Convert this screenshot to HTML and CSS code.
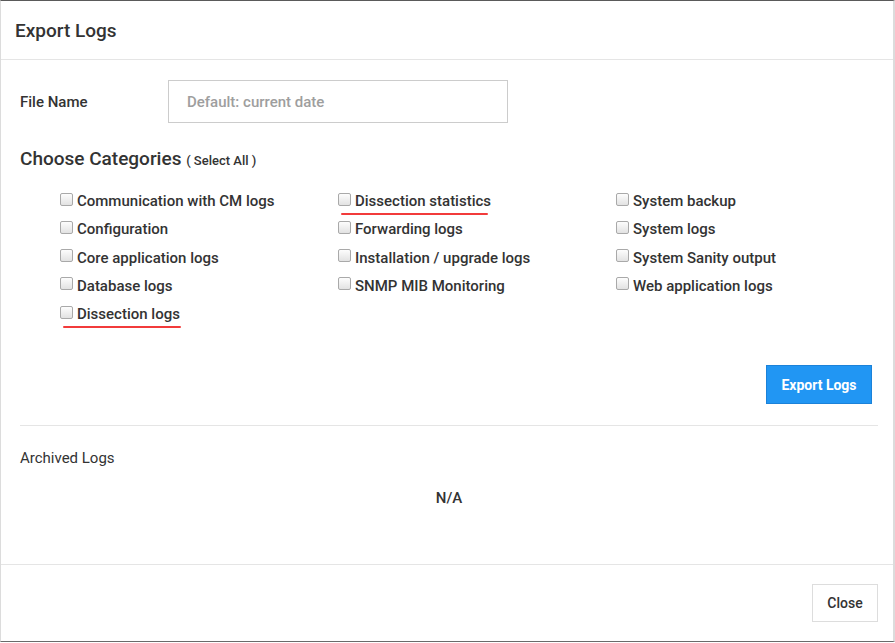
FILE: index.html
```html
<!DOCTYPE html>
<html>
<head>
<meta charset="utf-8">
<link rel="stylesheet" href="styles.css">
</head>
<body>
<div class="dialog">
  <div class="header"><h1 class="title">Export Logs</h1></div>
  <div class="body">
    <div class="file-row">
      <label class="file-label">File Name</label>
      <input class="file-input" type="text" placeholder="Default: current date">
    </div>
    <h2 class="section-title">Choose Categories <span class="select-all">( Select All )</span></h2>
    <div class="cats">
      <div class="col">
        <label class="cat"><span class="box"></span>Communication with CM logs</label>
        <label class="cat"><span class="box"></span>Configuration</label>
        <label class="cat"><span class="box"></span>Core application logs</label>
        <label class="cat"><span class="box"></span>Database logs</label>
        <label class="cat marked"><span class="box"></span>Dissection logs</label>
      </div>
      <div class="col">
        <label class="cat marked"><span class="box"></span>Dissection statistics</label>
        <label class="cat"><span class="box"></span>Forwarding logs</label>
        <label class="cat"><span class="box"></span>Installation / upgrade logs</label>
        <label class="cat"><span class="box"></span>SNMP MIB Monitoring</label>
      </div>
      <div class="col">
        <label class="cat"><span class="box"></span>System backup</label>
        <label class="cat"><span class="box"></span>System logs</label>
        <label class="cat"><span class="box"></span>System Sanity output</label>
        <label class="cat"><span class="box"></span>Web application logs</label>
      </div>
    </div>
    <div class="actions"><button class="btn-primary">Export Logs</button></div>
    <hr class="sep">
    <div class="archived">Archived Logs</div>
    <div class="na">N/A</div>
  </div>
  <div class="footer"><button class="btn-default">Close</button></div>
</div>
</body>
</html>
```
FILE: styles.css
```css
html, body {
  margin: 0;
  padding: 0;
  background: #ffffff;
}
body {
  font-family: Roboto, "Liberation Sans", sans-serif;
  color: #333333;
  width: 895px;
  height: 643px;
  overflow: hidden;
}
.dialog {
  width: 892px;
  height: 640px;
  border-top: 1px solid #5a5a5a;
  border-left: 1px solid #dcdcdc;
  border-right: 2px solid #dcdcdc;
  border-bottom: 1px solid #6a6a6a;
  display: flex;
  flex-direction: column;
  background: #fff;
}
.header {
  height: 58px;
  border-bottom: 1px solid #e5e5e5;
  display: flex;
  align-items: center;
  padding-left: 14px;
}
.title {
  margin: 0;
  font-size: 19px;
  font-weight: 500;
  color: #333;
  line-height: 24px;
  padding-top: 1px;
}
.body {
  padding: 0 15px 0 19px;
  display: flex;
  flex-direction: column;
  flex: 1;
}
.file-row {
  margin-top: 20px;
  display: flex;
  align-items: center;
}
.file-label {
  width: 148px;
  font-size: 15px;
  font-weight: 500;
  color: #333;
}
.file-input {
  width: 340px;
  height: 43px;
  box-sizing: border-box;
  border: 1px solid #cccccc;
  padding: 0 18px;
  font-family: Roboto, "Liberation Sans", sans-serif;
  font-size: 15px;
  font-weight: 500;
  color: #333;
  outline: none;
}
.file-input::placeholder {
  color: #9e9e9e;
}
.section-title {
  margin: 24px 0 0 0;
  font-size: 19px;
  font-weight: 500;
  line-height: 24px;
  color: #333;
}
.select-all {
  font-size: 13px;
  font-weight: 500;
  color: #333;
}
.cats {
  margin-top: 14px;
  padding-left: 40px;
  display: grid;
  grid-template-columns: 278px 278px 1fr;
}
.col {
  display: flex;
  flex-direction: column;
  align-items: flex-start;
}
.cat {
  position: relative;
  display: flex;
  align-items: center;
  height: 28.25px;
  font-size: 15px;
  font-weight: 500;
  color: #333;
}
.box {
  width: 11px;
  height: 11px;
  border: 1px solid #a9a9a9;
  border-radius: 2px;
  background: linear-gradient(#fdfdfd, #e2e2e2);
  margin-right: 4px;
  margin-top: -4px;
  flex: none;
}
.marked::after {
  content: "";
  position: absolute;
  left: 3px;
  right: -1px;
  bottom: 0;
  height: 2px;
  background: #f23b3b;
  border-radius: 1px;
}
.cats .col:nth-child(2) .marked::after {
  right: 3px;
}
.actions {
  margin-top: 37px;
  display: flex;
  justify-content: flex-end;
  padding-right: 6px;
}
.btn-primary {
  width: 106px;
  height: 39px;
  background: #2196f3;
  border: 1px solid #1b82d9;
  color: #fff;
  font-family: Roboto, "Liberation Sans", sans-serif;
  font-size: 14px;
  font-weight: 700;
  padding: 0;
}
.sep {
  margin: 21px 0 0 0;
  border: 0;
  border-top: 1px solid #e5e5e5;
  height: 0;
}
.archived {
  margin-top: 22px;
  font-size: 15px;
  line-height: 20px;
  color: #333;
}
.na {
  margin-top: 20px;
  font-size: 15px;
  font-weight: 500;
  line-height: 20px;
  text-align: center;
}
.footer {
  border-top: 1px solid #e5e5e5;
  display: flex;
  justify-content: flex-end;
  padding: 19px 15px 19px 0;
}
.btn-default {
  width: 66px;
  height: 38px;
  background: #fff;
  border: 1px solid #dddddd;
  color: #333;
  font-family: Roboto, "Liberation Sans", sans-serif;
  font-size: 14px;
  font-weight: 500;
  padding: 0;
}
```
